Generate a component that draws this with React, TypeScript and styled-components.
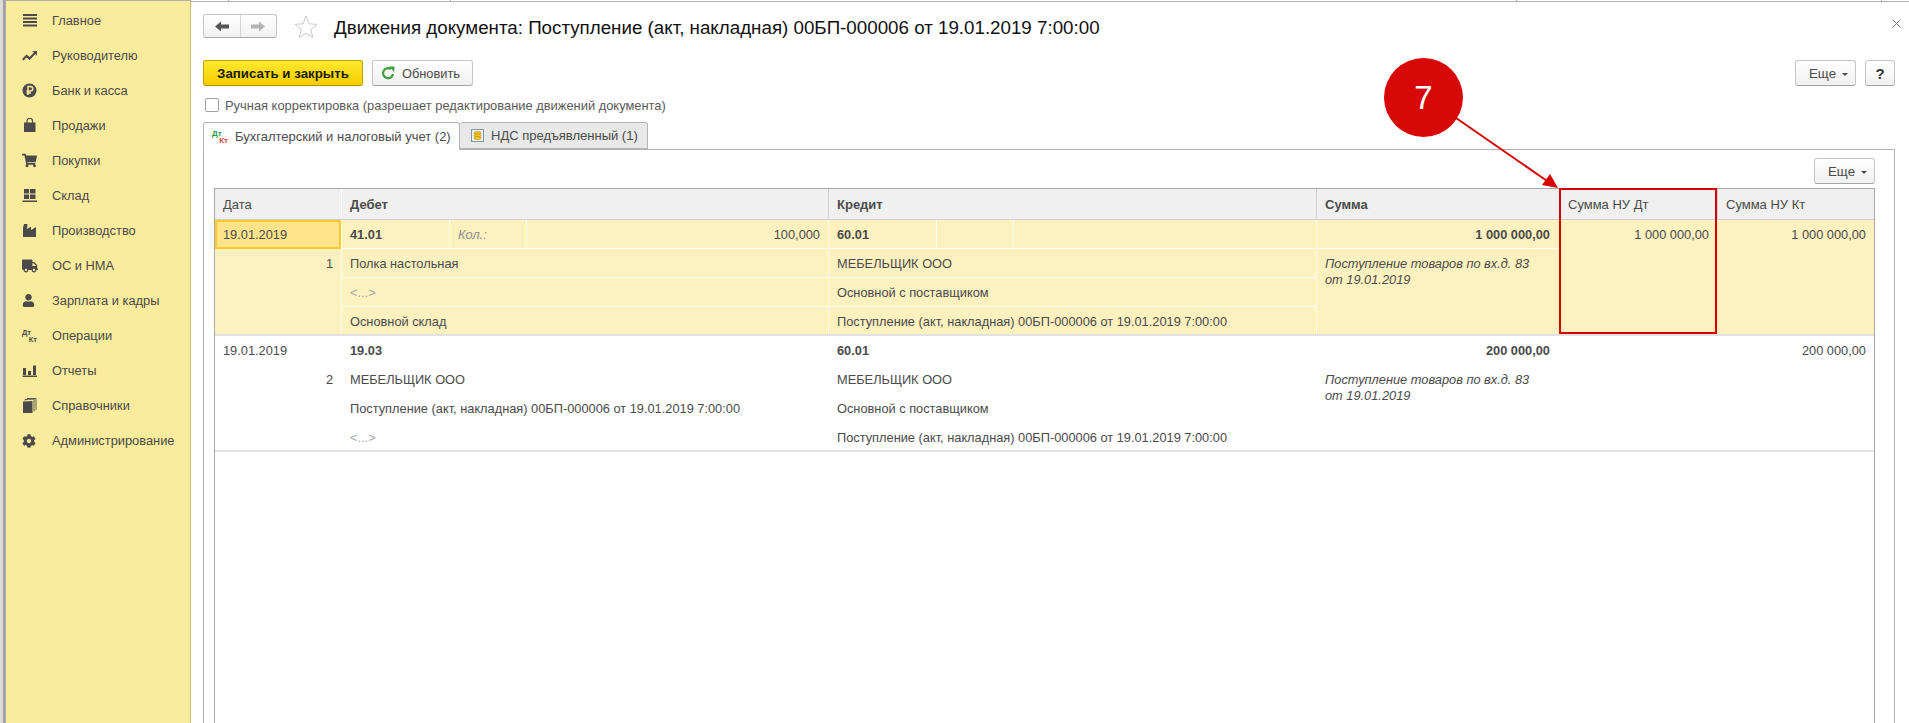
import styled, { createGlobalStyle } from "styled-components"
import { FaCog, FaShoppingCart, FaTruck, FaUser } from "react-icons/fa"
import type { ReactNode } from "react"

const GlobalStyle = createGlobalStyle`
  html, body {
    margin: 0;
    height: 100%;
    background: #fff;
    overflow: hidden;
  }
  #root {
    height: 100%;
  }
  * {
    box-sizing: border-box;
  }
`

const Shell = styled.div`
  position: relative;
  display: flex;
  height: 723px;
  width: 1909px;
  overflow: hidden;
  font-family: "Liberation Sans", Arial, sans-serif;
  font-size: 12.8px;
  color: #4b4b4b;
`

const LeftStrip = styled.div`
  width: 6px;
  flex: none;
  background: linear-gradient(to right, #dcdcdc 0, #dcdcdc 3px, #9a9a9a 3px, #b0b0b0 6px);
`

const Sidebar = styled.nav`
  width: 185px;
  flex: none;
  padding-top: 2px;
  background: #fbec9d;
  border-top: 1px solid #b0b0b0;
  border-right: 1px solid #c9bd78;
`

const NavItem = styled.div`
  display: flex;
  align-items: center;
  height: 35px;
  font-size: 12.85px;
  color: #4a4a4a;
`

const NavIcon = styled.span`
  width: 46px;
  padding-left: 16px;
  flex: none;
  display: flex;
  align-items: center;
  color: #4a4a4a;
`

const DkGlyph = styled.span`
  display: grid;
  width: 15px;
  font-size: 7.5px;
  line-height: 7px;
  font-weight: 700;
  color: #4a4a4a;
`

const Kt = styled.span`
  justify-self: end;
`

const Main = styled.main`
  flex: 1;
  min-width: 0;
  display: flex;
  flex-direction: column;
  padding-left: 12px;
`

const TopEdge = styled.div`
  display: flex;
  height: 2px;
  margin-left: -12px;
  flex: none;
  border-bottom: 1px solid #b0b0b0;
`

const TopTab = styled.span<{ $width: number }>`
  width: ${({ $width }) => $width}px;
  height: 1px;
  flex: none;
  border-right: 1px solid #b0b0b0;
`

const Header = styled.header`
  display: flex;
  align-items: center;
  height: 24px;
  margin-top: 12px;
  padding-right: 8px;
`

const NavPair = styled.div`
  display: flex;
  width: 74px;
  height: 24px;
  border: 1px solid #c6c6c6;
  border-bottom-color: #a8a8a8;
  border-radius: 3px;
  background: linear-gradient(#ffffff, #f1f1f1);
`

const NavArrow = styled.span<{ $right?: boolean }>`
  flex: 1;
  display: flex;
  align-items: center;
  justify-content: center;
  border-left: ${({ $right }) => ($right ? "1px solid #d4d4d4" : "none")};
`

const Star = styled.svg`
  margin-left: 17px;
  margin-right: 16px;
`

const Title = styled.h1`
  flex: 1;
  margin: 0;
  padding-top: 3px;
  font-size: 18.75px;
  font-weight: 400;
  color: #111;
  white-space: nowrap;
`

const Close = styled.svg`
  margin-bottom: 6px;
`

const Toolbar = styled.div`
  display: flex;
  align-items: center;
  gap: 9px;
  height: 26px;
  margin-top: 22px;
  padding-right: 14px;
`

const Button = styled.button`
  display: flex;
  align-items: center;
  justify-content: center;
  gap: 8px;
  height: 26px;
  padding: 0;
  font: inherit;
  font-size: 12.8px;
  color: #4b4b4b;
  border: 1px solid #c6c6c6;
  border-bottom-color: #a4a4a4;
  border-radius: 3px;
  background: linear-gradient(#ffffff, #f0f0f0);
`

const SaveButton = styled(Button)`
  width: 160px;
  font-size: 13.3px;
  font-weight: 700;
  color: #1c1c00;
  border-color: #c2a400;
  border-bottom-color: #ab8f00;
  background: linear-gradient(#ffe92e, #f6cd00);
`

const RefreshButton = styled(Button)`
  width: 101px;
  justify-content: flex-start;
  padding-left: 8px;
  gap: 7px;
`

const MoreButton = styled(Button)`
  width: 61px;
  justify-content: flex-start;
  padding-left: 13px;
  gap: 6px;
  font-size: 13.3px;
`

const HelpButton = styled(Button)`
  width: 30px;
  font-size: 15px;
  font-weight: 700;
  color: #333;
`

const Spacer = styled.div`
  flex: 1;
`

const Caret = styled.span`
  width: 0;
  height: 0;
  margin-top: 2px;
  border-left: 3px solid transparent;
  border-right: 3px solid transparent;
  border-top: 3px solid #4b4b4b;
`

const CheckRow = styled.label`
  display: flex;
  align-items: center;
  gap: 6px;
  height: 14px;
  margin-top: 12px;
  margin-left: 2px;
  font-size: 12.9px;
  color: #5a5a5a;
`

const CheckBox = styled.span`
  width: 14px;
  height: 14px;
  border: 1px solid #9f9f9f;
  border-radius: 2px;
  background: #fff;
`

const Tabs = styled.div`
  display: flex;
  height: 28px;
  margin-top: 10px;
  margin-bottom: -1px;
  position: relative;
  z-index: 1;
`

const Tab = styled.div<{ $active?: boolean }>`
  display: flex;
  align-items: center;
  gap: 7px;
  padding-left: ${({ $active }) => ($active ? "8px" : "11px")};
  width: ${({ $active }) => ($active ? "257px" : "188px")};
  height: ${({ $active }) => ($active ? "28px" : "27px")};
  font-size: 13px;
  color: #4b4b4b;
  border: 1px solid #b4b4b4;
  border-bottom: ${({ $active }) => ($active ? "none" : "1px solid #b4b4b4")};
  border-left: ${({ $active }) => ($active ? "1px solid #b4b4b4" : "none")};
  border-radius: 3px 3px 0 0;
  background: ${({ $active }) => ($active ? "#fff" : "#e8e8e8")};
`

const DtKtMark = styled.span`
  display: grid;
  width: 16px;
  font-size: 8px;
  line-height: 7px;
  font-weight: 700;
`

const Dt = styled.span`
  color: #1f9a4c;
`

const KtMark = styled.span`
  justify-self: end;
  color: #d9453a;
`

const Panel = styled.section`
  flex: 1;
  min-height: 0;
  display: flex;
  flex-direction: column;
  margin-right: 14px;
  padding: 8px 19px 0 10px;
  border: 1px solid #b0b0b0;
  border-bottom: none;
`

const PanelBar = styled.div`
  display: flex;
  justify-content: flex-end;
  height: 26px;
  margin-bottom: 4px;
  flex: none;
`

const Table = styled.div`
  flex: 1;
  min-height: 0;
  display: flex;
  flex-direction: column;
  border: 1px solid #a8a8a8;
  border-bottom: none;
`

const columns = "127px 487px 488px 243px 158px 156px"

const HeadRow = styled.div`
  display: grid;
  grid-template-columns: ${columns};
  height: 31px;
  flex: none;
  font-size: 13px;
  background: #f0f0f0;
  border-bottom: 1px solid #cfcfcf;
`

const HeadCell = styled.div<{ $bold?: boolean; $line?: string }>`
  display: flex;
  align-items: center;
  padding-left: 8px;
  font-weight: ${({ $bold }) => ($bold ? 700 : 400)};
  border-right: 1px solid ${({ $line }) => $line || "#d0d0d0"};
`

const Record = styled.div<{ $active?: boolean }>`
  display: grid;
  grid-template-columns: ${columns};
  height: 116px;
  flex: none;
  background: ${({ $active }) => ($active ? "#fdf1c0" : "#fff")};
  border-bottom: 2px solid #e2e2e2;
`

const Column = styled.div<{ $active?: boolean }>`
  display: flex;
  flex-direction: column;
  min-width: 0;
  border-right: 1px solid ${({ $active }) => ($active ? "#fff" : "transparent")};
`

const PlainColumn = styled(Column)`
  border-right: none;
`

const Line = styled.div<{ $active?: boolean; $last?: boolean }>`
  display: flex;
  align-items: center;
  flex: ${({ $last }) => ($last ? "1" : "none")};
  height: ${({ $last }) => ($last ? "auto" : "29px")};
  padding-left: 8px;
  padding-top: ${({ $last }) => ($last ? "1px" : "0")};
  white-space: nowrap;
  border-bottom: ${({ $active, $last }) =>
    $active && !$last ? "1px solid #fff" : "none"};
`

const AccountLine = styled(Line)`
  padding-left: 0;
`

const AccountCode = styled.div`
  width: 107px;
  padding-left: 8px;
  font-weight: 700;
  flex: none;
`

const QuantityLabel = styled.div<{ $active?: boolean }>`
  display: flex;
  align-items: center;
  width: 77px;
  height: 100%;
  padding-left: 8px;
  flex: none;
  font-style: italic;
  color: #8d8d8d;
  border-left: 1px solid ${({ $active }) => ($active ? "#fff" : "transparent")};
`

const QuantityValue = styled.div<{ $active?: boolean }>`
  display: flex;
  align-items: center;
  justify-content: flex-end;
  flex: 1;
  height: 100%;
  padding-right: 8px;
  border-left: 1px solid ${({ $active }) => ($active ? "#fff" : "transparent")};
`

const Muted = styled.span`
  color: #a8a8a8;
`

const DateCell = styled.div<{ $focused?: boolean }>`
  display: flex;
  align-items: center;
  height: 29px;
  padding-left: ${({ $focused }) => ($focused ? "6px" : "8px")};
  background: ${({ $focused }) => ($focused ? "#ffe38b" : "transparent")};
  border: ${({ $focused }) => ($focused ? "2px solid #fdc928" : "none")};
`

const RowNumber = styled.div`
  display: flex;
  align-items: center;
  justify-content: flex-end;
  height: 29px;
  padding-right: 8px;
`

const Amount = styled.div<{ $bold?: boolean; $active?: boolean; $inset?: number }>`
  display: flex;
  align-items: center;
  justify-content: flex-end;
  height: 29px;
  flex: none;
  padding-right: ${({ $inset }) => $inset ?? 8}px;
  font-weight: ${({ $bold }) => ($bold ? 700 : 400)};
  border-bottom: ${({ $active, $bold }) =>
    $active && $bold ? "1px solid #fff" : "none"};
`

const Comment = styled.div`
  padding: 7px 8px 0;
  font-style: italic;
  line-height: 16px;
`

const Marker = styled.div`
  position: absolute;
  left: 1384px;
  top: 58px;
  width: 79px;
  height: 79px;
  display: flex;
  align-items: center;
  justify-content: center;
  border-radius: 50%;
  background: #d90808;
  font-size: 33px;
  color: #fff;
`

const Pointer = styled.svg`
  position: absolute;
  left: 1450px;
  top: 110px;
`

const Highlight = styled.div`
  position: absolute;
  left: 1559px;
  top: 188px;
  width: 158px;
  height: 146px;
  border: 2px solid #d40000;
`

const BackArrow = () => (
  <svg width="14" height="11" viewBox="0 0 14 11">
    <path d="M0 5.500 6 0.500 6 3.500H14V7.500H6L6 10.500z" fill="#555" />
  </svg>
)

const ForwardArrow = () => (
  <svg width="14" height="11" viewBox="0 0 14 11">
    <path d="M14 5.500 8 0.500 8 3.500H0V7.500H8L8 10.500z" fill="#b4b4b4" />
  </svg>
)

const RefreshIcon = () => (
  <svg width="14" height="14" viewBox="0 0 14 14">
    <path d="M12 8A5 5 0 1 1 9.800 3" fill="none" stroke="#3f9f3f" strokeWidth="2.200" />
    <path d="M8 0.500 13.500 0.500 13.200 6z" fill="#3f9f3f" />
  </svg>
)

const CoinsIcon = () => (
  <svg width="13" height="13" viewBox="0 0 13 13">
    <rect x="0.500" y="0.500" width="12" height="12" fill="#eef3f8" stroke="#7f93a8" />
    <ellipse cx="6.500" cy="4" rx="3.600" ry="1.600" fill="#f3c41f" stroke="#b88a10" strokeWidth="0.600" />
    <ellipse cx="6.500" cy="6.500" rx="3.600" ry="1.600" fill="#f3c41f" stroke="#b88a10" strokeWidth="0.600" />
    <ellipse cx="6.500" cy="9" rx="3.600" ry="1.600" fill="#f3c41f" stroke="#b88a10" strokeWidth="0.600" />
  </svg>
)

const icon = (path: ReactNode) => (
  <svg width="15" height="15" viewBox="0 0 15 15" fill="#4a4a4a">
    {path}
  </svg>
)

const navItems: { label: string; icon: ReactNode }[] = [
  {
    label: "Главное",
    icon: icon(
      <path d="M1 1h14v2H1zM1 4.500h14v2H1zM1 8h14v2H1zM1 11.500h14v2H1z" />
    ),
  },
  {
    label: "Руководителю",
    icon: icon(
      <path d="M0 11 4.500 6.500 7.500 9 12 4.500 10 3h5v5l-1.500-2L7.500 12 4.500 9.500 1.500 12.500z" />
    ),
  },
  {
    label: "Банк и касса",
    icon: icon(
      <>
        <circle cx="7.500" cy="7.500" r="7" />
        <path
          d="M6 12V3.500h2.500a2.200 2.200 0 0 1 0 4.500H4.500M4.500 10H9"
          fill="none"
          stroke="#fbec9d"
          strokeWidth="1.500"
        />
      </>
    ),
  },
  {
    label: "Продажи",
    icon: icon(
      <>
        <path d="M2 4.500h11.500V14H2z" />
        <path d="M5 6V3a2.700 2.700 0 0 1 5.500 0v3" fill="none" stroke="#4a4a4a" strokeWidth="1.200" />
      </>
    ),
  },
  { label: "Покупки", icon: <FaShoppingCart size={15} /> },
  {
    label: "Склад",
    icon: icon(
      <path d="M2 1h5v4.500H2zM8 1h5.500v4.500H8zM2 6.500h5V11H2zM8 6.500h5.500V11H8zM0.500 12.500h14.500V14H0.500z" />
    ),
  },
  {
    label: "Производство",
    icon: icon(<path d="M1 14V5l1-4h3.500L5 6l4-2.500V7l5-3v10z" />),
  },
  { label: "ОС и НМА", icon: <FaTruck size={16} /> },
  { label: "Зарплата и кадры", icon: <FaUser size={13} /> },
  {
    label: "Операции",
    icon: (
      <DkGlyph>
        <span>Дт</span>
        <Kt>Кт</Kt>
      </DkGlyph>
    ),
  },
  {
    label: "Отчеты",
    icon: icon(
      <path d="M1 5h3v7H1zM6 8h3v4H6zM11 2.500h3V12h-3zM0.500 12.500H15V14H0.500z" />
    ),
  },
  {
    label: "Справочники",
    icon: icon(
      <>
        <path d="M1 3.500 10.500 3v12H1z" />
        <path d="M3 2.500V1.500L12 1v12.500M5 0.500h9V12" fill="none" stroke="#4a4a4a" strokeWidth="0.900" />
      </>
    ),
  },
  { label: "Администрирование", icon: <FaCog size={14} /> },
]

type Side = { code: string; quantity?: string; lines: [string, string, string] }

type Posting = {
  number: number
  debit: Side
  credit: Side
  sum: string
  taxDebit?: string
  taxCredit: string
}

const doc = "Поступление (акт, накладная) 00БП-000006 от 19.01.2019 7:00:00"

const postings: Posting[] = [
  {
    number: 1,
    debit: {
      code: "41.01",
      quantity: "100,000",
      lines: ["Полка настольная", "<...>", "Основной склад"],
    },
    credit: {
      code: "60.01",
      lines: ["МЕБЕЛЬЩИК ООО", "Основной с поставщиком", doc],
    },
    sum: "1 000 000,00",
    taxDebit: "1 000 000,00",
    taxCredit: "1 000 000,00",
  },
  {
    number: 2,
    debit: {
      code: "19.03",
      lines: ["МЕБЕЛЬЩИК ООО", doc, "<...>"],
    },
    credit: {
      code: "60.01",
      lines: ["МЕБЕЛЬЩИК ООО", "Основной с поставщиком", doc],
    },
    sum: "200 000,00",
    taxCredit: "200 000,00",
  },
]

const SideColumn = ({ side, active }: { side: Side; active: boolean }) => (
  <Column $active={active}>
    <AccountLine $active={active}>
      <AccountCode>{side.code}</AccountCode>
      <QuantityLabel $active={active}>{side.quantity ? "Кол.:" : ""}</QuantityLabel>
      <QuantityValue $active={active}>{side.quantity}</QuantityValue>
    </AccountLine>
    {side.lines.map((text, i) => (
      <Line key={i} $active={active} $last={i === 2}>
        {text === "<...>" ? <Muted>{text}</Muted> : text}
      </Line>
    ))}
  </Column>
)

const PostingRow = ({ posting, active }: { posting: Posting; active: boolean }) => (
  <Record $active={active}>
    <Column $active={active}>
      <DateCell $focused={active}>19.01.2019</DateCell>
      <RowNumber>{posting.number}</RowNumber>
    </Column>
    <SideColumn side={posting.debit} active={active} />
    <SideColumn side={posting.credit} active={active} />
    <Column $active={active}>
      <Amount $bold $active={active} $inset={9}>{posting.sum}</Amount>
      <Comment>
        Поступление товаров по вх.д. 83
        <br />
        от 19.01.2019
      </Comment>
    </Column>
    <PlainColumn>
      <Amount $inset={9}>{posting.taxDebit}</Amount>
    </PlainColumn>
    <PlainColumn>
      <Amount>{posting.taxCredit}</Amount>
    </PlainColumn>
  </Record>
)

const App = () => (
  <Shell>
    <GlobalStyle />
    <LeftStrip />
    <Sidebar>
      {navItems.map((item) => (
        <NavItem key={item.label}>
          <NavIcon>{item.icon}</NavIcon>
          {item.label}
        </NavItem>
      ))}
    </Sidebar>
    <Main>
      <TopEdge>
        <TopTab $width={38} />
        <TopTab $width={222} />
        <TopTab $width={1066} />
        <TopTab $width={365} />
      </TopEdge>
      <Header>
        <NavPair>
          <NavArrow><BackArrow /></NavArrow>
          <NavArrow $right><ForwardArrow /></NavArrow>
        </NavPair>
        <Star width="24" height="23" viewBox="0 0 24 23">
          <path
            d="M12 1l3 7.800 8 .6-6.200 5.200 2 8L12 18.200 5.200 22.600l2-8L1 9.400l8-.6z"
            fill="#fff"
            stroke="#c8c8c8"
          />
        </Star>
        <Title>Движения документа: Поступление (акт, накладная) 00БП-000006 от 19.01.2019 7:00:00</Title>
        <Close width="9" height="9" viewBox="0 0 9 9">
          <path d="M0.500 0.500 8.500 8.500M8.500 0.500 0.500 8.500" stroke="#777" />
        </Close>
      </Header>
      <Toolbar>
        <SaveButton>Записать и закрыть</SaveButton>
        <RefreshButton><RefreshIcon />Обновить</RefreshButton>
        <Spacer />
        <MoreButton>Еще <Caret /></MoreButton>
        <HelpButton>?</HelpButton>
      </Toolbar>
      <CheckRow>
        <CheckBox />
        Ручная корректировка (разрешает редактирование движений документа)
      </CheckRow>
      <Tabs>
        <Tab $active>
          <DtKtMark>
            <Dt>Дт</Dt>
            <KtMark>Кт</KtMark>
          </DtKtMark>
          Бухгалтерский и налоговый учет (2)
        </Tab>
        <Tab>
          <CoinsIcon />
          НДС предъявленный (1)
        </Tab>
      </Tabs>
      <Panel>
        <PanelBar>
          <MoreButton>Еще <Caret /></MoreButton>
        </PanelBar>
        <Table>
          <HeadRow>
            <HeadCell $line="#fff">Дата</HeadCell>
            <HeadCell $bold>Дебет</HeadCell>
            <HeadCell $bold>Кредит</HeadCell>
            <HeadCell $bold>Сумма</HeadCell>
            <HeadCell>Сумма НУ Дт</HeadCell>
            <HeadCell $line="transparent">Сумма НУ Кт</HeadCell>
          </HeadRow>
          {postings.map((posting, i) => (
            <PostingRow key={posting.number} posting={posting} active={i === 0} />
          ))}
        </Table>
      </Panel>
    </Main>
    <Highlight />
    <Pointer width="115" height="85" viewBox="0 0 115 85">
      <path d="M6 8 100 73" stroke="#d40000" strokeWidth="2" />
      <path d="M108 78 92 75 100 64z" fill="#d40000" />
    </Pointer>
    <Marker>7</Marker>
  </Shell>
)

export default App
